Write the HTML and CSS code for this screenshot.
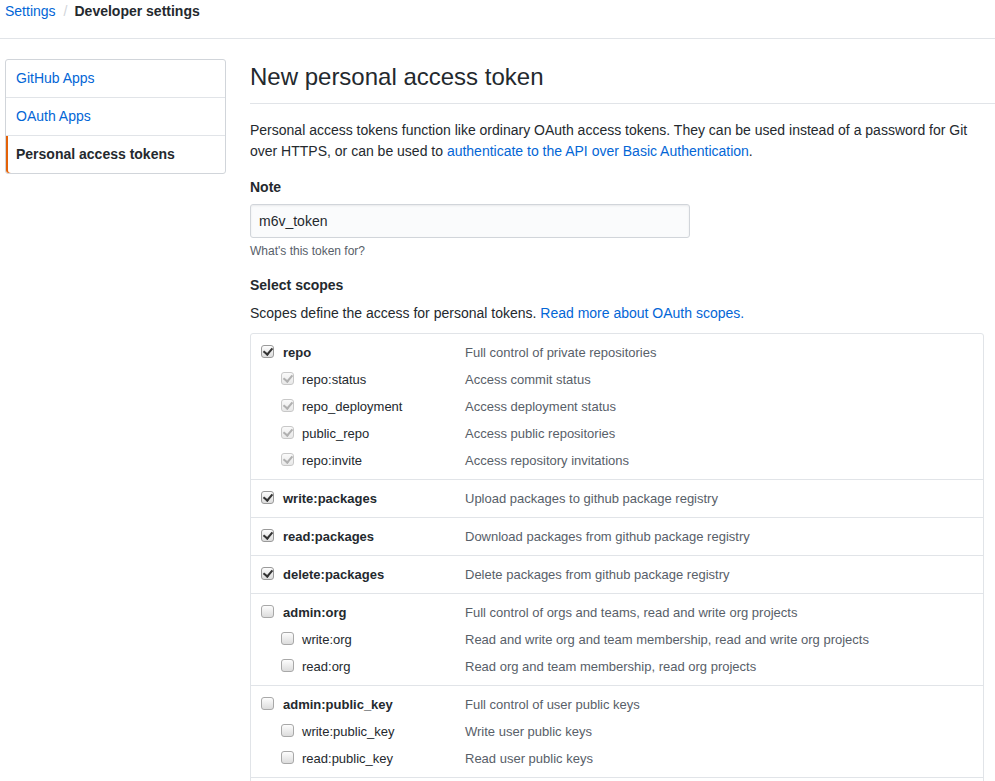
FILE: index.html
```html
<!DOCTYPE html>
<html lang="en">
<head>
<meta charset="utf-8">
<title>New personal access token</title>
<link rel="stylesheet" href="styles.css">
</head>
<body>
<header class="crumbs">
  <a href="#" class="link">Settings</a><span class="sep">/</span><strong>Developer settings</strong>
</header>
<div class="layout">
  <nav class="menu">
    <a href="#" class="menu-item">GitHub Apps</a>
    <a href="#" class="menu-item">OAuth Apps</a>
    <a href="#" class="menu-item selected">Personal access tokens</a>
  </nav>
  <main class="main">
    <h1 class="subhead">New personal access token</h1>
    <p class="intro">Personal access tokens function like ordinary OAuth access tokens. They can be used instead of a password for Git over HTTPS, or can be used to <a href="#" class="link">authenticate to the API over Basic Authentication</a>.</p>
    <div class="form-group">
      <label class="flabel">Note</label>
      <input class="input" type="text" value="m6v_token">
      <p class="note">What's this token for?</p>
    </div>
    <div class="form-group scopes-group">
      <label class="flabel">Select scopes</label>
      <p class="scopes-intro">Scopes define the access for personal tokens. <a href="#" class="link">Read more about OAuth scopes.</a></p>
      <div class="scopes">
        <div class="group">
          <div class="row main-row"><span class="lab"><span class="cb on"></span>repo</span><span class="desc">Full control of private repositories</span></div>
          <div class="row sub-row"><span class="lab"><span class="cb dis"></span>repo:status</span><span class="desc">Access commit status</span></div>
          <div class="row sub-row"><span class="lab"><span class="cb dis"></span>repo_deployment</span><span class="desc">Access deployment status</span></div>
          <div class="row sub-row"><span class="lab"><span class="cb dis"></span>public_repo</span><span class="desc">Access public repositories</span></div>
          <div class="row sub-row"><span class="lab"><span class="cb dis"></span>repo:invite</span><span class="desc">Access repository invitations</span></div>
        </div>
        <div class="group">
          <div class="row main-row"><span class="lab"><span class="cb on"></span>write:packages</span><span class="desc">Upload packages to github package registry</span></div>
        </div>
        <div class="group">
          <div class="row main-row"><span class="lab"><span class="cb on"></span>read:packages</span><span class="desc">Download packages from github package registry</span></div>
        </div>
        <div class="group">
          <div class="row main-row"><span class="lab"><span class="cb on"></span>delete:packages</span><span class="desc">Delete packages from github package registry</span></div>
        </div>
        <div class="group">
          <div class="row main-row"><span class="lab"><span class="cb"></span>admin:org</span><span class="desc">Full control of orgs and teams, read and write org projects</span></div>
          <div class="row sub-row"><span class="lab"><span class="cb"></span>write:org</span><span class="desc">Read and write org and team membership, read and write org projects</span></div>
          <div class="row sub-row"><span class="lab"><span class="cb"></span>read:org</span><span class="desc">Read org and team membership, read org projects</span></div>
        </div>
        <div class="group">
          <div class="row main-row"><span class="lab"><span class="cb"></span>admin:public_key</span><span class="desc">Full control of user public keys</span></div>
          <div class="row sub-row"><span class="lab"><span class="cb"></span>write:public_key</span><span class="desc">Write user public keys</span></div>
          <div class="row sub-row"><span class="lab"><span class="cb"></span>read:public_key</span><span class="desc">Read user public keys</span></div>
        </div>
        <div class="group">
          <div class="row main-row"><span class="lab"><span class="cb"></span>admin:repo_hook</span><span class="desc">Full control of repository hooks</span></div>
          <div class="row sub-row"><span class="lab"><span class="cb"></span>write:repo_hook</span><span class="desc">Write repository hooks</span></div>
          <div class="row sub-row"><span class="lab"><span class="cb"></span>read:repo_hook</span><span class="desc">Read repository hooks</span></div>
        </div>
      </div>
    </div>
  </main>
</div>
</body>
</html>
```
FILE: styles.css
```css
* { box-sizing: border-box; }
html, body { margin: 0; padding: 0; background: #fff; }
body {
  font-family: "Liberation Sans", Arial, Helvetica, sans-serif;
  font-size: 14px;
  line-height: 1.5;
  color: #24292e;
  overflow: hidden;
}
a { text-decoration: none; }
.link { color: #0366d6; }

.crumbs {
  height: 39px;
  padding: 0 0 0 5px;
  border-bottom: 1px solid #e1e4e8;
  line-height: 22px;
  font-size: 14px;
}
.crumbs .sep { color: #d1d5da; padding: 0 7px 0 8px; }
.crumbs strong { font-weight: 700; color: #24292e; }

.layout {
  display: flex;
  align-items: flex-start;
  padding: 20px 0 0 5px;
}
.menu {
  width: 221px;
  flex: none;
  display: flex;
  flex-direction: column;
  border: 1px solid #d1d5da;
  border-radius: 3px;
  margin-right: 24px;
  background: #fff;
}
.menu-item {
  display: block;
  padding: 8px 10px;
  color: #0366d6;
  line-height: 21px;
  border-bottom: 1px solid #e1e4e8;
}
.menu-item:last-child { border-bottom: 0; }
.menu-item.selected {
  color: #24292e;
  font-weight: 700;
  box-shadow: inset 2px 0 0 #e36209;
  border-bottom-left-radius: 3px;
}

.main { width: 734px; flex: none; }
.subhead {
  margin: 0 0 16px;
  padding: 0 0 8px;
  border-bottom: 1px solid #e1e4e8;
  font-size: 24px;
  font-weight: 400;
  line-height: 36px;
  width: 745px;
}
.intro { margin: 0 0 15px; }
.form-group { margin: 0 0 15px; }
.flabel { display: block; font-weight: 700; margin: 0 0 6px; line-height: 21px; }
.input {
  display: block;
  width: 440px;
  height: 34px;
  padding: 6px 8px;
  font-family: inherit;
  font-size: 14px;
  color: #24292e;
  background: #fafbfc;
  border: 1px solid #d1d5da;
  border-radius: 3px;
  box-shadow: inset 0 1px 2px rgba(27,31,35,0.075);
  outline: none;
}
.note { margin: 4px 0 0; font-size: 12px; line-height: 18px; color: #586069; }
.scopes-group { margin-top: 15px; }
.scopes-group .flabel { margin-bottom: 7px; }
.scopes-intro { margin: 0 0 9px; }

.scopes {
  border: 1px solid #e1e4e8;
  border-radius: 3px;
  font-size: 13px;
}
.group {
  padding: 5px 10px 5px;
  border-bottom: 1px solid #e1e4e8;
}
.group:last-child { border-bottom: 0; }
.row {
  display: grid;
  grid-template-columns: 204px 1fr;
  line-height: 27px;
  height: 27px;
  white-space: nowrap;
}
.lab { display: flex; align-items: center; gap: 9px; color: #24292e; }
.main-row .lab { font-weight: 700; }
.sub-row .lab { padding-left: 20px; gap: 8px; }
.desc { color: #586069; }

.cb {
  position: relative;
  width: 13px;
  height: 13px;
  flex: none;
  border-radius: 3px;
  border: 1px solid #a8a8a8;
  background: linear-gradient(#fdfdfd, #dcdcdc);
  margin-top: -3px;
}
.cb.on { border-color: #9a9a9a; }
.cb.on::after, .cb.dis::after {
  content: "";
  position: absolute;
  left: 3px;
  top: 0px;
  width: 4px;
  height: 7px;
  border-right: 2px solid #333;
  border-bottom: 2px solid #333;
  transform: rotate(40deg);
}
.cb.dis {
  border-color: #c8c8c8;
  background: linear-gradient(#fafafa, #e8e8e8);
}
.cb.dis::after { border-color: #b0b0b0; }
```
